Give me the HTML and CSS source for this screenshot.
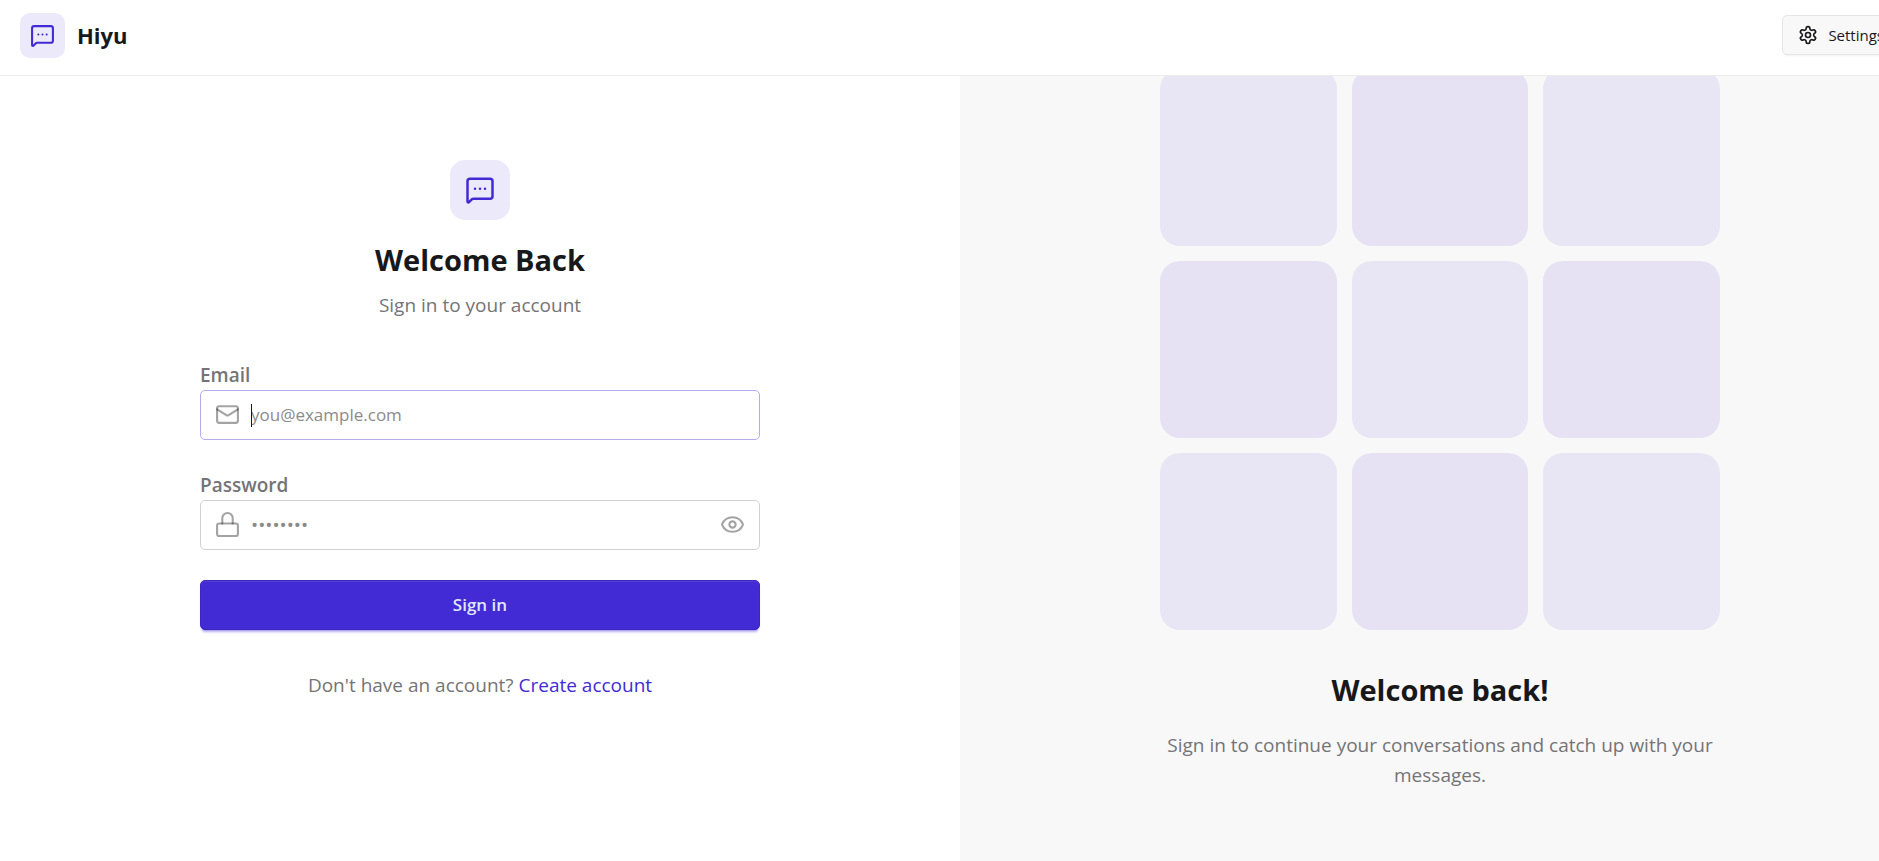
FILE: index.html
```
<!DOCTYPE html>
<html lang="en">
<head>
    <meta charset="UTF-8">
    <meta name="viewport" content="width=device-width, initial-scale=1.0">
    <title>Hiyu</title>
    <link rel="stylesheet" href="styles.css">
</head>
<body>
    <svg class="sprite" aria-hidden="true">
        <symbol id="icon-message" viewBox="0 0 24 24">
            <path d="M22 17a2 2 0 0 1-2 2H6.828a2 2 0 0 0-1.414.586l-2.202 2.202A.71.71 0 0 1 2 21.286V5a2 2 0 0 1 2-2h16a2 2 0 0 1 2 2z"/>
            <path d="M12 11h.01M16 11h.01M8 11h.01"/>
        </symbol>
    </svg>

    <div class="page">
        <header class="navbar">
            <a class="brand" href="#">
                <span class="brand-icon"><svg class="icon"><use href="#icon-message"/></svg></span>
                <span class="brand-name">Hiyu</span>
            </a>
            <button class="settings-button" type="button">
                <svg class="icon" viewBox="0 0 24 24">
                    <path d="M12.22 2h-.44a2 2 0 0 0-2 2v.18a2 2 0 0 1-1 1.73l-.43.25a2 2 0 0 1-2 0l-.15-.08a2 2 0 0 0-2.73.73l-.22.38a2 2 0 0 0 .73 2.73l.15.1a2 2 0 0 1 1 1.72v.51a2 2 0 0 1-1 1.74l-.15.09a2 2 0 0 0-.73 2.73l.22.38a2 2 0 0 0 2.73.73l.15-.08a2 2 0 0 1 2 0l.43.25a2 2 0 0 1 1 1.73V20a2 2 0 0 0 2 2h.44a2 2 0 0 0 2-2v-.18a2 2 0 0 1 1-1.73l.43-.25a2 2 0 0 1 2 0l.15.08a2 2 0 0 0 2.73-.73l.22-.39a2 2 0 0 0-.73-2.73l-.15-.08a2 2 0 0 1-1-1.74v-.5a2 2 0 0 1 1-1.74l.15-.09a2 2 0 0 0 .73-2.73l-.22-.38a2 2 0 0 0-2.73-.73l-.15.08a2 2 0 0 1-2 0l-.43-.25a2 2 0 0 1-1-1.73V4a2 2 0 0 0-2-2z"/>
                    <circle cx="12" cy="12" r="3"/>
                </svg>
                Settings
            </button>
        </header>

        <main class="panels">
            <section class="panel">
                <div class="content">
                    <div class="intro">
                        <span class="intro-icon"><svg class="icon"><use href="#icon-message"/></svg></span>
                        <h1>Welcome Back</h1>
                        <p>Sign in to your account</p>
                    </div>

                    <form class="login-form" onsubmit="return false">
                        <div class="field">
                            <label for="email">Email</label>
                            <div class="input-box active">
                                <svg class="icon" viewBox="0 0 24 24">
                                    <rect x="2" y="4" width="20" height="16" rx="2"/>
                                    <path d="m22 7-8.97 5.7a1.94 1.94 0 0 1-2.06 0L2 7"/>
                                </svg>
                                <span class="caret"></span>
                                <input type="email" id="email" placeholder="you@example.com">
                            </div>
                        </div>

                        <div class="field">
                            <label for="password">Password</label>
                            <div class="input-box">
                                <svg class="icon" viewBox="0 0 24 24">
                                    <rect x="2" y="11" width="20" height="12" rx="2"/>
                                    <path d="M7 11V6a5 5 0 0 1 10 0v5"/>
                                </svg>
                                <input type="password" id="password" placeholder="••••••••">
                                <button class="toggle" type="button" aria-label="Show password">
                                    <svg class="icon" viewBox="0 0 24 24">
                                        <path d="M2.062 12.348a1 1 0 0 1 0-.696 10.75 10.75 0 0 1 19.876 0 1 1 0 0 1 0 .696 10.75 10.75 0 0 1-19.876 0"/>
                                        <circle cx="12" cy="12" r="3"/>
                                    </svg>
                                </button>
                            </div>
                        </div>

                        <button class="submit" type="submit">Sign in</button>
                    </form>

                    <p class="signup">Don't have an account? <a href="#">Create account</a></p>
                </div>
            </section>

            <section class="panel pattern">
                <div class="content">
                    <div class="tiles">
                        <div class="tile"></div>
                        <div class="tile"></div>
                        <div class="tile"></div>
                        <div class="tile"></div>
                        <div class="tile"></div>
                        <div class="tile"></div>
                        <div class="tile"></div>
                        <div class="tile"></div>
                        <div class="tile"></div>
                    </div>
                    <h2>Welcome back!</h2>
                    <p>Sign in to continue your conversations and catch up with your messages.</p>
                </div>
            </section>
        </main>
    </div>

    <script>
        // Show or hide the password
        document.querySelector('.toggle').addEventListener('click', () => {
            const input = document.getElementById('password');
            input.type = input.type === 'password' ? 'text' : 'password';
        });
    </script>
</body>
</html>
```
FILE: styles.css
```
* {
    box-sizing: border-box;
}
body {
    margin: 0;
    overflow: hidden;
    font-family: "Segoe UI", "Open Sans", sans-serif;
    font-size: 19px;
    line-height: 30px;
    color: #18181b;
    background-color: #fff;
}
h1, h2, p {
    margin: 0;
}
h1, h2 {
    font-size: 29px;
    font-weight: 700;
    line-height: 40px;
}
a {
    color: #422ad5;
    text-decoration: none;
}
button, input {
    font-family: inherit;
}
.sprite {
    display: none;
}
.icon {
    width: 25px;
    height: 25px;
    fill: none;
    stroke: currentColor;
    stroke-width: 2;
    stroke-linecap: round;
    stroke-linejoin: round;
    flex-shrink: 0;
}
/* the layout runs slightly past the right edge of the window */
.page {
    margin-right: -41px;
}

/* Navbar */
.navbar {
    position: absolute;
    top: 0;
    left: 0;
    right: -41px;
    z-index: 1;
    height: 76px;
    padding: 0 20px 5px;
    display: flex;
    align-items: center;
    justify-content: space-between;
    background-color: #fff;
    border-bottom: 1px solid #ececec;
}
.brand {
    display: flex;
    align-items: center;
    gap: 12px;
    color: inherit;
}
.brand-icon {
    display: flex;
    align-items: center;
    justify-content: center;
    width: 45px;
    height: 45px;
    border-radius: 10px;
    background-color: #ece9fa;
    color: #422ad5;
}
.brand-name {
    font-size: 22px;
    font-weight: 700;
}
.settings-button {
    display: flex;
    align-items: center;
    gap: 10px;
    height: 40px;
    padding: 0 15px;
    border: 1px solid #e5e5e5;
    border-radius: 5px;
    background-color: #f8f8f8;
    color: #18181b;
    font-size: 15px;
    font-weight: 500;
    box-shadow: 0 3px 2px -2px rgba(0,0,0,0.05);
}
.settings-button .icon {
    width: 20px;
    height: 20px;
}

/* Panels */
.panels {
    display: grid;
    grid-template-columns: 1fr 1fr;
    min-height: 100vh;
}
.panel {
    display: flex;
    align-items: center;
    justify-content: center;
    padding-bottom: 2px;
    color: #747476;
}
.pattern {
    background-color: #f8f8f8;
    text-align: center;
}
.content {
    width: 560px;
}
h1, h2 {
    color: #18181b;
}

/* Login form */
.intro {
    display: flex;
    flex-direction: column;
    align-items: center;
    margin-bottom: 40px;
}
.intro-icon {
    display: flex;
    align-items: center;
    justify-content: center;
    width: 60px;
    height: 60px;
    margin-bottom: 20px;
    border-radius: 15px;
    background-color: #ece9fa;
    color: #422ad5;
}
.intro-icon .icon {
    width: 30px;
    height: 30px;
}
.intro h1 {
    margin-bottom: 10px;
}
.login-form {
    display: flex;
    flex-direction: column;
    gap: 30px;
}
.field label {
    display: block;
    font-weight: 600;
}
.input-box {
    position: relative;
    display: flex;
    align-items: center;
    height: 50px;
    padding: 0 14px;
    border: 1px solid #d1d1d1;
    border-radius: 5px;
    color: rgba(24,24,27,0.4);
}
.input-box.active {
    border-color: #b4aaee;
}
.input-box input {
    flex: 1;
    min-width: 0;
    height: 46px;
    padding: 0 0 0 11px;
    border: none;
    outline: none;
    background: none;
    font-size: 17px;
    color: #18181b;
}
.input-box input::placeholder {
    color: #8b8b8c;
    opacity: 1;
}
.input-box input[type="password"] {
    font-size: 19px;
}
.caret {
    position: absolute;
    left: 50px;
    top: 13px;
    width: 1px;
    height: 23px;
    background-color: #18181b;
}
.toggle {
    display: flex;
    padding: 0;
    border: none;
    background: none;
    color: inherit;
    cursor: pointer;
}
.submit {
    height: 50px;
    border: 1px solid #3b26c0;
    border-radius: 5px;
    background-color: #422ad5;
    color: #e0e7ff;
    font-size: 17px;
    font-weight: 600;
    box-shadow: inset 0 1px 0 #553fd9, 0 3px 2px -2px rgba(66,42,213,0.3), 0 4px 3px -2px rgba(66,42,213,0.3);
    cursor: pointer;
}
.signup {
    margin-top: 40px;
    text-align: center;
}

/* Pattern */
.tiles {
    display: grid;
    grid-template-columns: repeat(3, 1fr);
    gap: 15px;
    margin-bottom: 40px;
}
.tile {
    aspect-ratio: 1;
    border-radius: 20px;
    background-color: #e8e5f4;
}
.tile:nth-child(even) {
    background-color: #e6e2f4;
}
.pattern h2 {
    margin-bottom: 20px;
}
```
